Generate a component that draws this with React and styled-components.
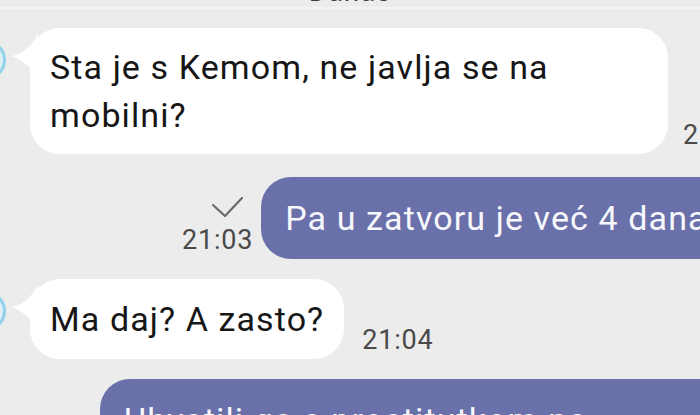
import React from "react";
import styled, { createGlobalStyle } from "styled-components";

const Global = createGlobalStyle`
  html, body { margin: 0; padding: 0; background: #ececec; overflow: hidden; }
  body { font-family: Roboto, "Noto Sans", "Liberation Sans", sans-serif; }
  #root { width: 700px; height: 415px; overflow: hidden; }
`;

const Screen = styled.div`
  width: 700px;
  height: 415px;
  overflow: hidden;
  background: #ececec;
`;

const List = styled.div`
  display: flex;
  flex-direction: column;
  gap: 20px;
  width: 800px;
`;

const DateLabel = styled.div`
  margin-top: -23px;
  margin-bottom: -1px;
  width: 700px;
  text-align: center;
  font-size: 28px;
  line-height: 30px;
  letter-spacing: 0.8px;
  color: #3a3a3a;
  border-bottom: 2px solid #f4f4f4;
`;

const InRow = styled.div`
  display: flex;
  align-items: flex-end;
  gap: ${(p) => p.$gap}px;
`;

const Avatar = styled.div`
  align-self: flex-start;
  flex: none;
  width: 40px;
  height: 40px;
  margin-left: -34px;
  margin-top: 12px;
  margin-right: ${(p) => 24 - p.$gap}px;
  border-radius: 50%;
  border: 3px solid #8fd3ea;
  background: #dfeef3;
  box-sizing: border-box;
`;

const Bubble = styled.div`
  position: relative;
  flex: none;
  box-sizing: border-box;
  max-width: ${(p) => p.$max}px;
  padding: ${(p) => p.$pv}px 20px ${(p) => p.$pv}px ${(p) => (p.$out ? 24 : 20)}px;
  border-radius: 30px;
  background: ${(p) => (p.$out ? "#6a70a9" : "#ffffff")};
  color: ${(p) => (p.$out ? "#f7f7fc" : "#161616")};
  font-size: 34px;
  line-height: 48px;
  letter-spacing: 1.1px;
  white-space: ${(p) => (p.$nowrap ? "nowrap" : "normal")};
  ${(p) =>
    !p.$out &&
    `
    &::before {
      content: "";
      position: absolute;
      left: -20px;
      top: 6px;
      width: 28px;
      height: 44px;
      background: #ffffff;
      clip-path: path("M28 0 C 22 12, 12 20, 2 22 C 12 26, 22 34, 28 44 Z");
    }
  `}
`;

const Time = styled.div`
  flex: none;
  font-size: 27px;
  line-height: 30px;
  letter-spacing: 0.8px;
  color: #4a4a4a;
  padding-bottom: ${(p) => (p.$pb === undefined ? 4 : p.$pb)}px;
`;

const OutRow = styled.div`
  display: flex;
  align-items: flex-end;
  gap: 8px;
  padding-left: ${(p) => p.$pl}px;
  margin-top: ${(p) => p.$mt || 0}px;
`;

const Meta = styled.div`
  display: flex;
  flex-direction: column;
  align-items: flex-end;
  padding-bottom: 4px;
`;

const CheckIcon = styled.svg`
  margin-right: 8px;
  margin-bottom: 4px;
`;

const Check = () => (
  <CheckIcon width="36" height="26" viewBox="0 0 36 26">
    <path d="M4 10 L16 21 L33 3" fill="none" stroke="#6a6a6a" strokeWidth="2.2" strokeLinecap="round" strokeLinejoin="round" />
  </CheckIcon>
);

export default function App() {
  return (
    <Screen>
      <Global />
      <List>
        <DateLabel>Danas</DateLabel>
        <InRow $gap={15}>
          <Avatar $gap={15} />
          <Bubble $max={638} $pv={15}>
            Sta je s Kemom, ne javlja se na mobilni?
          </Bubble>
          <Time>21:03</Time>
        </InRow>
        <OutRow $pl={182} $mt={3}>
          <Meta>
            <Check />
            <Time $pb={0}>21:03</Time>
          </Meta>
          <Bubble $out $nowrap $pv={17}>
            Pa u zatvoru je već 4 dana
          </Bubble>
        </OutRow>
        <InRow $gap={18}>
          <Avatar $gap={18} />
          <Bubble $max={638} $pv={16}>
            Ma daj? A zasto?
          </Bubble>
          <Time>21:04</Time>
        </InRow>
        <OutRow $pl={100}>
          <Bubble $out $max={640} $pv={17}>
            Uhvatili ga s prostitutkom na benzinskoj pumpi
          </Bubble>
        </OutRow>
      </List>
    </Screen>
  );
}
